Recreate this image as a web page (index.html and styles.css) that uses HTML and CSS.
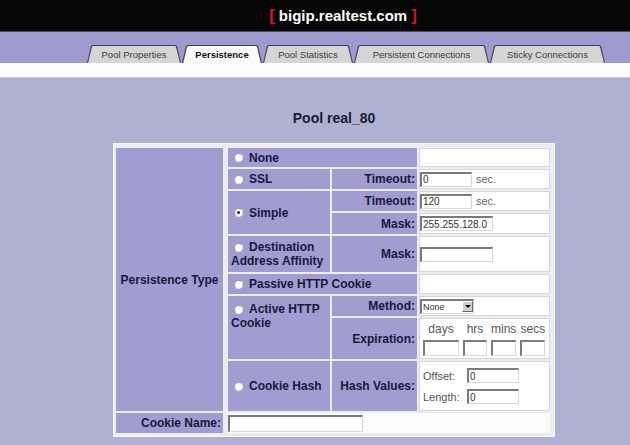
FILE: index.html
```html
<!DOCTYPE html>
<html lang="en">
<head>
  <meta charset="UTF-8">
  <meta name="viewport" content="width=device-width, initial-scale=1.0">
  <title>Pool real_80 - Persistence</title>
  <link rel="stylesheet" href="styles.css">
</head>
<body>

<!-- Header -->
<div class="topbar">
  <span class="bracket">[</span><span class="host">bigip.realtest.com</span><span class="bracket">]</span>
</div>

<!-- Tabs -->
<div class="tabbar">
  <div class="tab tab-props">Pool Properties</div>
  <div class="tab tab-persist active">Persistence</div>
  <div class="tab tab-stats">Pool Statistics</div>
  <div class="tab tab-conns">Persistent Connections</div>
  <div class="tab tab-sticky">Sticky Connections</div>
</div>
<div class="tabline"></div>

<!-- Persistence form -->
<div class="content">
  <h2 class="pool-name">Pool real_80</h2>

  <div class="form-grid">
    <div class="cell type-label">Persistence Type</div>

    <div class="cell option wide"><input type="radio" name="ptype">None</div>
    <div class="cell value"></div>

    <div class="cell option"><input type="radio" name="ptype">SSL</div>
    <div class="cell label">Timeout:</div>
    <div class="cell value"><input type="text" class="field short" value="0"><span class="unit">sec.</span></div>

    <div class="cell option tall"><input type="radio" name="ptype" checked>Simple</div>
    <div class="cell label">Timeout:</div>
    <div class="cell value"><input type="text" class="field short" value="120"><span class="unit">sec.</span></div>
    <div class="cell label">Mask:</div>
    <div class="cell value"><input type="text" class="field mask" value="255.255.128.0"></div>

    <div class="cell option multi"><input type="radio" name="ptype">Destination Address Affinity</div>
    <div class="cell label">Mask:</div>
    <div class="cell value"><input type="text" class="field mask"></div>

    <div class="cell option wide"><input type="radio" name="ptype">Passive HTTP Cookie</div>
    <div class="cell value"></div>

    <div class="cell option tall multi"><input type="radio" name="ptype">Active HTTP Cookie</div>
    <div class="cell label">Method:</div>
    <div class="cell value">
      <div class="select"><span class="select-text">None</span><span class="select-arrow"></span></div>
    </div>
    <div class="cell label">Expiration:</div>
    <div class="cell value expiration">
      <div class="exp-col exp-days"><span>days</span><input type="text" class="field"></div>
      <div class="exp-col exp-hrs"><span>hrs</span><input type="text" class="field"></div>
      <div class="exp-col exp-mins"><span>mins</span><input type="text" class="field"></div>
      <div class="exp-col exp-secs"><span>secs</span><input type="text" class="field"></div>
    </div>

    <div class="cell option"><input type="radio" name="ptype">Cookie Hash</div>
    <div class="cell label">Hash Values:</div>
    <div class="cell value hash">
      <div class="hash-row"><span>Offset:</span><input type="text" class="field hash-field" value="0"></div>
      <div class="hash-row"><span>Length:</span><input type="text" class="field hash-field" value="0"></div>
    </div>

    <div class="cell label name-label">Cookie Name:</div>
    <div class="cell value name-value"><input type="text" class="field name-field"></div>
  </div>
</div>

</body>
</html>
```

FILE: styles.css
```css
body {
  margin: 0;
  padding: 0;
  background-color: #aeb1d2;
  font-family: "Liberation Sans", Arial, sans-serif;
  color: #18183e;
}

/* Header */
.topbar {
  height: 31px;
  background-color: #070707;
  display: flex;
  align-items: center;
  justify-content: center;
  padding-left: 56px;
  color: #fff;
  font-size: 15px;
  font-weight: bold;
}

.bracket {
  color: #d3161c;
  font-size: 17px;
  margin: 0 4px;
}

/* Tabs */
.tabbar {
  height: 32px;
  background-color: #9e9ad0;
  border-top: 1px solid #4a4a5a;
  box-sizing: border-box;
  display: flex;
  align-items: flex-end;
  padding-left: 87px;
}

.tab {
  position: relative;
  z-index: 0;
  height: 18px;
  margin-right: 1px;
  display: flex;
  align-items: center;
  justify-content: center;
  font-size: 9.5px;
  color: #3a3a3a;
}

.tab::before {
  content: "";
  position: absolute;
  inset: 0;
  background-color: #3e3e4e;
  clip-path: polygon(0 100%, 4px 1px, 6px 0, calc(100% - 6px) 0, calc(100% - 4px) 1px, 100% 100%);
  z-index: -1;
}

.tab::after {
  content: "";
  position: absolute;
  inset: 0;
  background-color: #d5d5d5;
  clip-path: polygon(1px 100%, 5px 2px, 6px 1px, calc(100% - 6px) 1px, calc(100% - 5px) 2px, calc(100% - 1px) 100%);
  z-index: -1;
}

.tab.active {
  font-weight: bold;
  color: #111;
}

.tab.active::after {
  background-color: #fbfbfb;
  bottom: -1px;
}

.tab-props { width: 94px; }
.tab-persist { width: 80px; }
.tab-stats { width: 90px; }
.tab-conns { width: 135px; }
.tab-sticky { width: 115px; }

.tabline {
  height: 14px;
  background-color: #fbfbfb;
  border-bottom: 1px solid #c8c8dc;
}

/* Content */
.content {
  padding-left: 113px;
}

.pool-name {
  width: 442px;
  margin: 32px 0 16px;
  text-align: center;
  font-size: 14px;
  line-height: 17px;
  color: #1a1a30;
}

.form-grid {
  width: 442px;
  box-sizing: border-box;
  display: grid;
  grid-template-columns: 110px 102px 85px 131px;
  grid-template-rows: 19px 20px 20px 21px 36px 20px 20px 41px 50px 20px;
  gap: 2px;
  padding: 4px 4px 3px 2px;
  background-color: #ededf1;
  border: 1px solid #f8f8f8;
}

.cell {
  background-color: #a19dd1;
  font-size: 12px;
  font-weight: bold;
  display: flex;
  align-items: center;
}

.type-label {
  grid-row: span 9;
  margin-right: 3px;
  justify-content: center;
}

.option {
  padding-left: 1px;
}

.option.wide {
  grid-column: span 2;
}

.option.tall {
  grid-row: span 2;
}

.option.multi {
  display: block;
  align-self: stretch;
  line-height: 14px;
  padding-left: 3px;
}

.option.multi.tall {
  padding-top: 6px;
}

.option.multi:not(.tall) {
  padding-top: 4px;
}

.option input[type="radio"] {
  appearance: none;
  width: 9px;
  height: 9px;
  margin: 0 6px 0 5px;
  border-radius: 50%;
  background-color: #fff;
  border: 1px solid #9a9a9a;
  border-right-color: #e2e2e2;
  border-bottom-color: #e2e2e2;
  box-sizing: border-box;
  position: relative;
  vertical-align: -1px;
}

.option.multi input[type="radio"] {
  margin-left: 3px;
}

.option input[type="radio"]:checked::after {
  content: "";
  position: absolute;
  left: 2px;
  top: 2px;
  width: 3px;
  height: 3px;
  border-radius: 50%;
  background-color: #111;
}

.label {
  justify-content: flex-end;
  padding-right: 2px;
}

.value {
  background-color: #fff;
  border: 1px solid #d6d6d6;
  box-sizing: border-box;
  font-weight: normal;
  color: #555;
}

/* Inputs */
.field {
  height: 15px;
  box-sizing: border-box;
  padding: 0 1px;
  margin: 0;
  border: 1px solid #d8d8d8;
  border-top: 2px solid #7a7a7a;
  border-left: 2px solid #7a7a7a;
  background-color: #fff;
  font-family: "Liberation Sans", Arial, sans-serif;
  font-size: 10px;
  color: #333;
}

.short {
  width: 52px;
}

.mask {
  width: 73px;
}

.unit {
  margin-left: 4px;
  font-size: 11px;
  color: #666;
}

.select {
  width: 54px;
  height: 15px;
  box-sizing: border-box;
  border: 1px solid #d8d8d8;
  border-top: 2px solid #7a7a7a;
  border-left: 2px solid #7a7a7a;
  display: flex;
  align-items: center;
  justify-content: space-between;
}

.select-text {
  font-size: 9px;
  padding-left: 1px;
  color: #333;
}

.select-arrow {
  width: 11px;
  height: 11px;
  background-color: #d4d0c8;
  border: 1px solid #fff;
  border-right-color: #666;
  border-bottom-color: #666;
  box-sizing: border-box;
  position: relative;
}

.select-arrow::after {
  content: "";
  position: absolute;
  left: 2px;
  top: 3px;
  border-left: 3px solid transparent;
  border-right: 3px solid transparent;
  border-top: 3px solid #000;
}

.expiration {
  align-items: flex-start;
  padding: 2px 0 0 3px;
  gap: 4px;
}

.exp-col {
  display: flex;
  flex-direction: column;
  align-items: center;
  gap: 3px;
  font-size: 12px;
  color: #555;
}

.exp-col span {
  line-height: 16px;
}

.exp-col .field {
  height: 16px;
}

.exp-days .field { width: 36px; }
.exp-hrs .field { width: 24px; }
.exp-mins .field { width: 25px; }
.exp-secs .field { width: 25px; }

.hash {
  flex-direction: column;
  align-items: flex-start;
  justify-content: center;
  gap: 6px;
  padding-left: 3px;
}

.hash-row {
  display: flex;
  align-items: center;
  font-size: 11px;
  color: #555;
}

.hash-row span {
  width: 44px;
}

.hash-field {
  width: 52px;
}

.name-label {
  margin-right: 3px;
}

.name-value {
  grid-column: span 3;
  border: none;
  background-color: #fbfbfb;
}

.name-field {
  width: 135px;
  height: 17px;
}
```
